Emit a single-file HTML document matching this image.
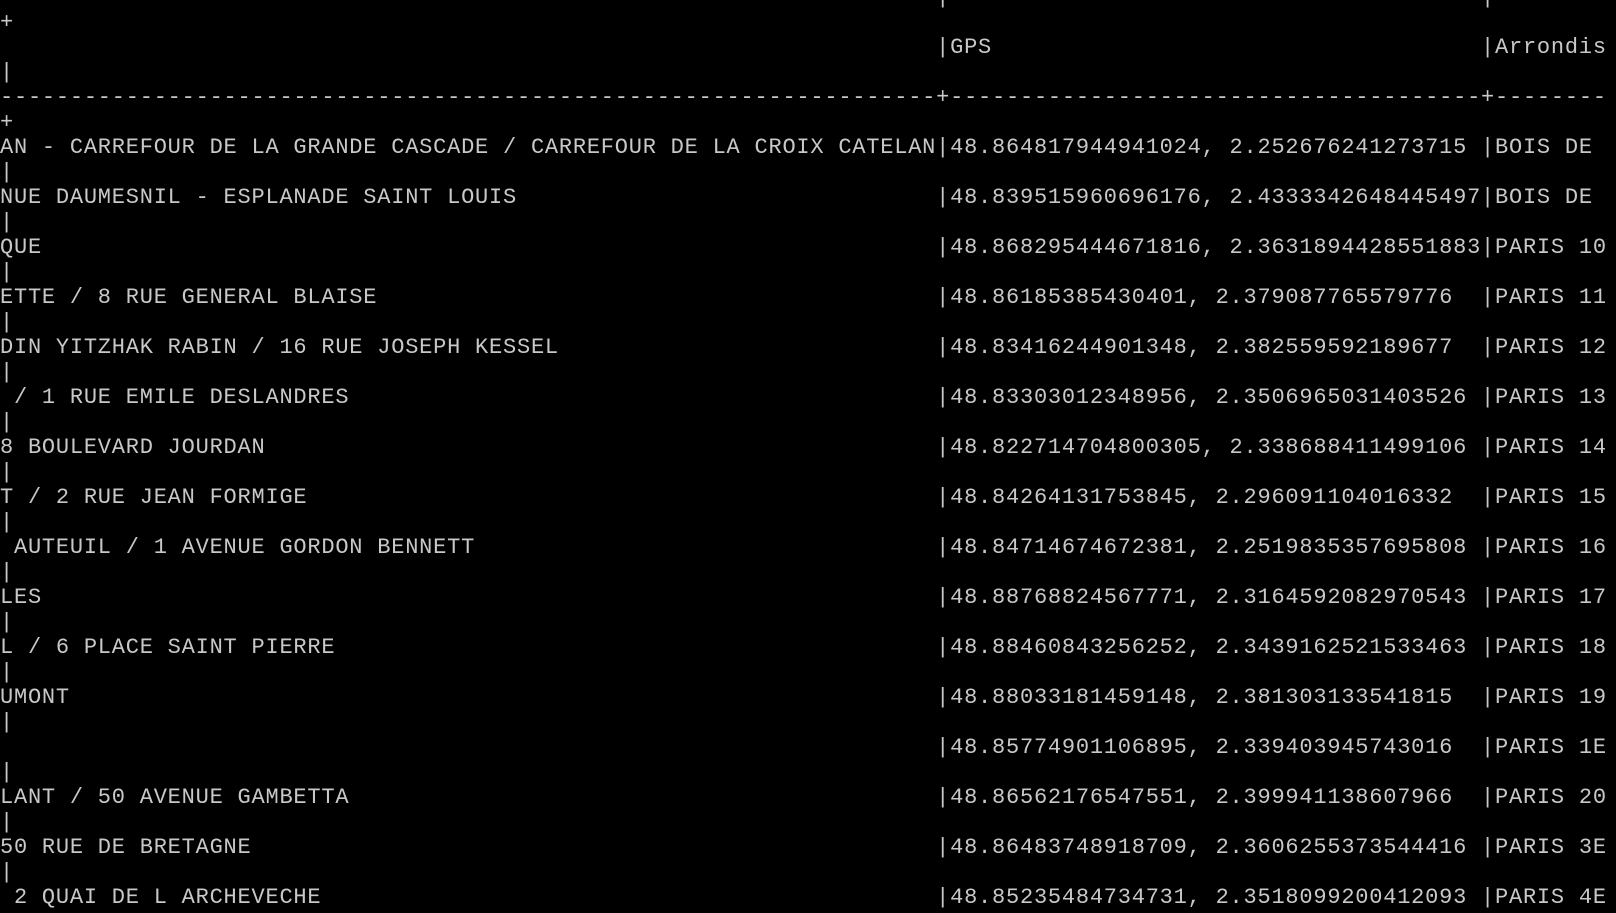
<!DOCTYPE html>
<html><head><meta charset="utf-8"><style>
html,body{margin:0;padding:0;background:#000;width:1616px;height:913px;overflow:hidden}
pre{margin:0;position:absolute;left:0;top:-15px;font-family:"Liberation Mono",monospace;font-size:22px;letter-spacing:0.77px;line-height:25px;color:#c8c8c8;white-space:pre}
</style></head><body><pre>                                                                   |                                      |
+
                                                                   |GPS                                   |Arrondis
|
-------------------------------------------------------------------+--------------------------------------+--------
+
AN - CARREFOUR DE LA GRANDE CASCADE / CARREFOUR DE LA CROIX CATELAN|48.864817944941024, 2.252676241273715 |BOIS DE
|
NUE DAUMESNIL - ESPLANADE SAINT LOUIS                              |48.839515960696176, 2.4333342648445497|BOIS DE
|
QUE                                                                |48.868295444671816, 2.3631894428551883|PARIS 10
|
ETTE / 8 RUE GENERAL BLAISE                                        |48.86185385430401, 2.379087765579776  |PARIS 11
|
DIN YITZHAK RABIN / 16 RUE JOSEPH KESSEL                           |48.83416244901348, 2.382559592189677  |PARIS 12
|
 / 1 RUE EMILE DESLANDRES                                          |48.83303012348956, 2.3506965031403526 |PARIS 13
|
8 BOULEVARD JOURDAN                                                |48.822714704800305, 2.338688411499106 |PARIS 14
|
T / 2 RUE JEAN FORMIGE                                             |48.84264131753845, 2.296091104016332  |PARIS 15
|
 AUTEUIL / 1 AVENUE GORDON BENNETT                                 |48.84714674672381, 2.2519835357695808 |PARIS 16
|
LES                                                                |48.88768824567771, 2.3164592082970543 |PARIS 17
|
L / 6 PLACE SAINT PIERRE                                           |48.88460843256252, 2.3439162521533463 |PARIS 18
|
UMONT                                                              |48.88033181459148, 2.381303133541815  |PARIS 19
|
                                                                   |48.85774901106895, 2.339403945743016  |PARIS 1E
|
LANT / 50 AVENUE GAMBETTA                                          |48.86562176547551, 2.399941138607966  |PARIS 20
|
50 RUE DE BRETAGNE                                                 |48.86483748918709, 2.3606255373544416 |PARIS 3E
|
 2 QUAI DE L ARCHEVECHE                                            |48.85235484734731, 2.3518099200412093 |PARIS 4E
</pre></body></html>
